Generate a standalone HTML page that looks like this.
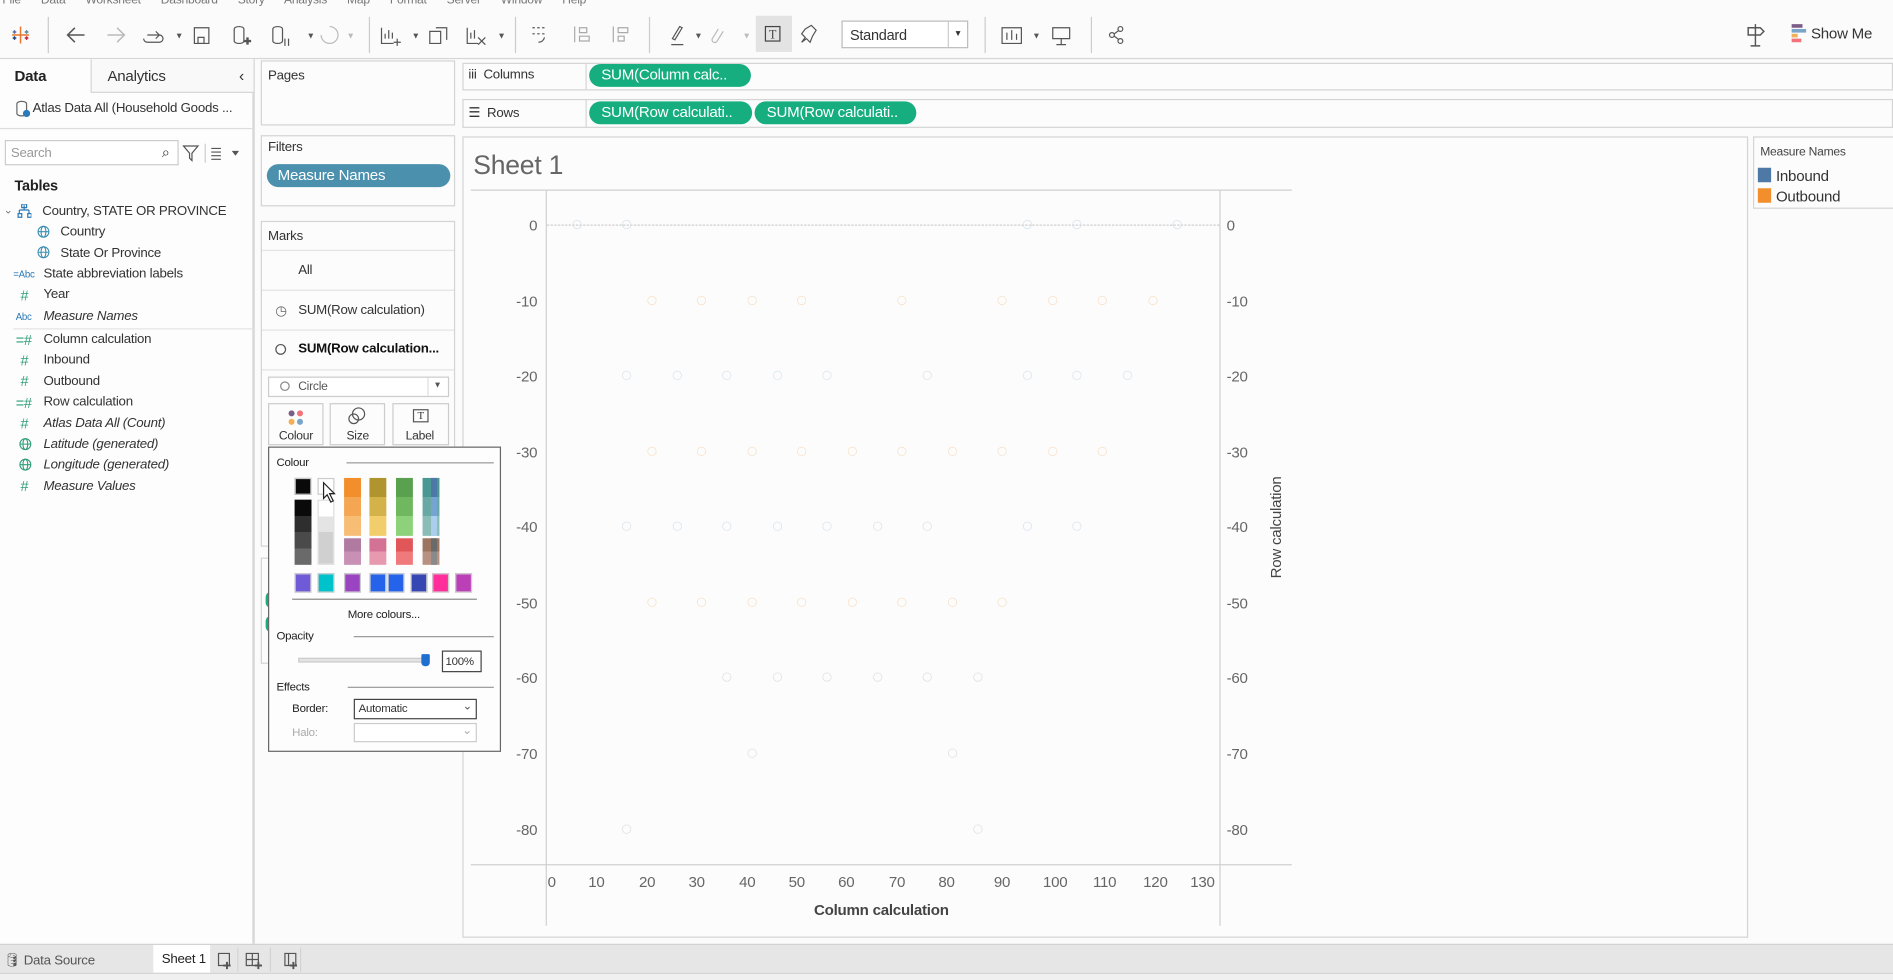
<!DOCTYPE html>
<html><head><meta charset="utf-8"><style>
*{box-sizing:border-box;margin:0;padding:0}
body{width:1893px;height:980px;overflow:hidden;background:#fbfbfb;font-family:"Liberation Sans",sans-serif;color:#333}
#w{position:absolute;left:0;top:0;width:1568px;height:812px;transform:scale(1.2073,1.2069);transform-origin:0 0;background:#fbfbfb;letter-spacing:-0.2px}
.a{position:absolute}
.t{position:absolute;font-size:11px;white-space:nowrap}
.box{position:absolute;border:1px solid #d4d4d4;background:#fcfcfc}
.pill{position:absolute;background:#17ae7f;color:#fff;border-radius:10px;font-size:12.5px;padding:2px 10px;height:19px;white-space:nowrap}
.g{color:#2f9e77}
.it{font-style:italic}
.sw{position:absolute;width:14px;border:1px solid #ccc}
</style></head><body><div id="w">
<div class="t" style="top:-5px;left:2px;color:#777;font-size:10px;word-spacing:14px">File Data Worksheet Dashboard Story Analysis Map Format Server Window Help</div>
<svg class="a" style="left:0;top:10px" width="1000" height="38">
<g stroke="#555" stroke-width="1" fill="none">
<g transform="translate(17,19)" stroke-width="1.2"><path d="M0-7V7M-7 0H7" stroke="#e8762c"/><path d="M-5-4V-1M-6.5-2.5H-3.5" stroke="#5b6fa5"/><path d="M5 1V4M3.5 2.5H6.5" stroke="#c72037"/><path d="M5-4V-1M3.5-2.5H6.5" stroke="#59879b"/><path d="M-5 1V4M-6.5 2.5H-3.5" stroke="#1f457e"/></g>
<path d="M40 4V34" stroke="#ccc"/>
<path d="M70 19H56M62 13L56 19L62 25" stroke-width="1.3"/>
<path d="M89 19H103M97 13L103 19L97 25" stroke="#bbb" stroke-width="1.3"/>
<path d="M119 22a3 3 0 0 0 3 3h10a3 3 0 0 0 0-6h-10M129 16l3 3-3 3"/>
<path d="M161 13h12v13h-12z"/><path d="M164 21h5v5h-5z"/>
<path d="M194 14a4 2 0 0 1 8 0v10a4 2 0 0 1-8 0z"/><path d="M202 24h6M205 21v6" stroke-width="2"/>
<path d="M226 14a4 2 0 0 1 8 0v10a4 2 0 0 1-8 0z"/><path d="M236 22v6M239 22v6"/>
<path d="M273 12a7 7 0 1 1-7 7" stroke="#bbb"/>
<path d="M306 4V34" stroke="#ccc"/>
<path d="M316 13v13h10M319 22v-4M322 22v-7M325 22v-5M326 25h6M329 22v6" />
<path d="M356 16h9v10h-9zM361 13h9v10"/>
<path d="M387 13v13h9M390 22v-5M393 22v-7M396 21l6 6M402 21l-6 6"/>
<path d="M427 4V34" stroke="#ccc"/>
<path d="M441 13h2M445 13h2M449 13h2M441 18h2M445 18h2M449 18h2M446 25a5 5 0 0 0 5-4"/>
<path d="M476 12v13M480 13h6v4h-6zM480 20h8v4h-8z" stroke="#aaa"/>
<path d="M508 12v13M512 13h8v4h-8zM512 20h5v4h-5z" stroke="#aaa"/>
<path d="M538 4V34" stroke="#ccc"/>
<path d="M556 27h10M557 22l6-10 2 1-6 10z"/>
<path d="M595 14l-5 8a2 2 0 0 0 4 2l5-8" stroke="#bbb"/>
</g>
<rect x="626" y="3" width="30" height="30" fill="#e3e3e3"/>
<rect x="634" y="12" width="12" height="12" fill="none" stroke="#444"/><text x="637" y="22" font-size="10" fill="#444" font-family="Liberation Serif">T</text>
<path d="M667 14l5-3 4 4-3 5-2 5-3-3-4 3 3-4-3-3z" fill="none" stroke="#555"/>
<text x="145" y="22" font-size="7" fill="#555">▼</text><text x="341" y="22" font-size="7" fill="#555">▼</text><text x="412" y="22" font-size="7" fill="#555">▼</text><text x="254" y="22" font-size="7" fill="#555">▼</text><text x="287" y="22" font-size="7" fill="#bbb">▼</text><text x="575" y="22" font-size="7" fill="#555">▼</text><text x="615" y="22" font-size="7" fill="#bbb">▼</text>
<g stroke="#555" fill="none" stroke-width="1">
<path d="M816 4V34" stroke="#ccc"/><path d="M830 13h16v13h-16zM834 23v-6M838 23v-8M842 23v-5"/>
<path d="M872 13h14v9h-14zM879 22v5M875 27h8"/>
<path d="M904 4V34" stroke="#ccc"/><circle cx="921" cy="19" r="2"/><circle cx="928" cy="14" r="2"/><circle cx="928" cy="24" r="2"/><path d="M923 18l4-3M923 20l4 3"/>
</g>
<text x="855" y="22" font-size="7" fill="#555">▼</text>
</svg>
<div class="a" style="left:697px;top:17px;width:105px;height:23px;border:1px solid #bbb;background:#fff;font-size:12px;padding:4px 6px">Standard<span style="position:absolute;right:0;top:0;width:16px;height:21px;border-left:1px solid #ccc;font-size:7px;text-align:center;line-height:21px">▼</span></div>
<svg class="a" style="left:1444px;top:18px" width="24" height="22"><path d="M10 2v18M6 20h8M4 5h10l3 3-3 3H4z" fill="none" stroke="#555" stroke-width="1.2"/></svg>
<div class="a" style="left:1484px;top:20px;width:9px;height:3px;background:#7b5d87"></div>
<div class="a" style="left:1484px;top:24px;width:12px;height:3px;background:#7ba4c9"></div>
<div class="a" style="left:1484px;top:28px;width:5px;height:3px;background:#f4b059"></div>
<div class="a" style="left:1484px;top:32px;width:8px;height:3px;background:#f3737a"></div>
<div class="t" style="left:1500px;top:21px;font-size:12.5px;color:#333">Show Me</div>
<div class="a" style="left:0;top:48px;width:1568px;height:1px;background:#d6d6d6"></div>
<div class="a" style="left:0;top:49px;width:210px;height:733px;background:#fdfdfd;border-right:1px solid #d6d6d6"></div>
<div class="a" style="left:75px;top:49px;width:136px;height:28px;border-left:1px solid #d6d6d6;border-bottom:1px solid #d6d6d6;background:#f9f9f9"></div>
<div class="t" style="left:12px;top:56px;font-size:12.5px;font-weight:bold;color:#222">Data</div>
<div class="t" style="left:89px;top:56px;font-size:12.5px">Analytics</div>
<div class="t" style="left:198px;top:55px;font-size:13px">‹</div>
<svg class="a" style="left:13px;top:83px" width="12" height="14"><path d="M1 3a4 2 0 0 1 8 0v8a4 2 0 0 1-8 0z" fill="none" stroke="#666"/><circle cx="9" cy="11" r="3" fill="#2c7ab8"/></svg>
<div class="t" style="left:27px;top:84px;font-size:11px">Atlas Data All (Household Goods ...</div>
<div class="a" style="left:0;top:106px;width:210px;height:1px;background:#ddd"></div>
<div class="a" style="left:4px;top:116px;width:144px;height:21px;border:1px solid #ccc;background:#fff"></div>
<div class="t" style="left:9px;top:121px;color:#999">Search</div>
<div class="t" style="left:134px;top:119px;font-size:12px">⌕</div>
<svg class="a" style="left:151px;top:119px" width="50" height="16"><path d="M1 2h12l-5 6v6l-2-2V8z" fill="none" stroke="#555"/><path d="M19 0v16" stroke="#ccc"/><path d="M24 4h8M24 7h8M24 10h8M24 13h8" stroke="#555"/><path d="M41 6l3 4 3-4z" fill="#555"/></svg>
<div class="t" style="left:12px;top:147px;font-size:12px;font-weight:bold;color:#222">Tables</div>
<div class="t" style="left:3px;top:169px;font-size:9px;color:#777">⌄</div>
<svg class="a" style="left:14px;top:169px" width="12" height="12"><path d="M6 1v4M2 5h8M2 5v3M10 5v3M1 8h3v3H1zM9 8h3v3H9zM4 0h4v3H4z" fill="none" stroke="#2c7ab8" stroke-width="1"/></svg>
<div class="t" style="left:35px;top:169px">Country, STATE OR PROVINCE</div>
<svg class="a" style="left:30px;top:186px" width="12" height="30"><g fill="none" stroke="#3a8db0" stroke-width="0.9"><circle cx="6" cy="6" r="4.5"/><ellipse cx="6" cy="6" rx="2" ry="4.5"/><path d="M1.5 6h9"/><circle cx="6" cy="23" r="4.5"/><ellipse cx="6" cy="23" rx="2" ry="4.5"/><path d="M1.5 23h9"/></g></svg>
<div class="t" style="left:50px;top:186px">Country</div>
<div class="t" style="left:50px;top:204px">State Or Province</div>
<div class="t" style="left:11px;top:223px;font-size:8px;color:#2c7ab8">=Abc</div><div class="t" style="left:36px;top:221px">State abbreviation labels</div>
<div class="t g" style="left:17px;top:238px;font-size:12px">#</div><div class="t" style="left:36px;top:238px">Year</div>
<div class="t" style="left:13px;top:258px;font-size:8px;color:#2c7ab8">Abc</div><div class="t it" style="left:36px;top:256px">Measure Names</div>
<div class="a" style="left:11px;top:272px;width:199px;height:1px;background:#e3e3e3"></div>
<div class="t g" style="left:13px;top:275px;font-size:12px">=#</div><div class="t" style="left:36px;top:275px">Column calculation</div>
<div class="t g" style="left:17px;top:292px;font-size:12px">#</div><div class="t" style="left:36px;top:292px">Inbound</div>
<div class="t g" style="left:17px;top:309px;font-size:12px">#</div><div class="t" style="left:36px;top:310px">Outbound</div>
<div class="t g" style="left:13px;top:327px;font-size:12px">=#</div><div class="t" style="left:36px;top:327px">Row calculation</div>
<div class="t g" style="left:17px;top:344px;font-size:12px">#</div><div class="t it" style="left:36px;top:345px">Atlas Data All (Count)</div>
<svg class="a" style="left:15px;top:362px" width="12" height="30"><g fill="none" stroke="#2f9e77" stroke-width="0.9"><circle cx="6" cy="6" r="4.5"/><ellipse cx="6" cy="6" rx="2" ry="4.5"/><path d="M1.5 6h9"/><circle cx="6" cy="23" r="4.5"/><ellipse cx="6" cy="23" rx="2" ry="4.5"/><path d="M1.5 23h9"/></g></svg>
<div class="t it" style="left:36px;top:362px">Latitude (generated)</div>
<div class="t it" style="left:36px;top:379px">Longitude (generated)</div>
<div class="t g" style="left:17px;top:396px;font-size:12px">#</div><div class="t it" style="left:36px;top:397px">Measure Values</div>
<div class="box" style="left:216px;top:50px;width:161px;height:54px"></div>
<div class="t" style="left:222px;top:57px">Pages</div>
<div class="box" style="left:216px;top:112px;width:161px;height:59px"></div>
<div class="t" style="left:222px;top:116px">Filters</div>
<div class="a" style="left:221px;top:136px;width:152px;height:19px;background:#4b91ae;border-radius:10px;color:#fff;font-size:12.5px;padding:2px 9px">Measure Names</div>
<div class="box" style="left:216px;top:183px;width:161px;height:270px"></div>
<div class="t" style="left:222px;top:190px">Marks</div>
<div class="a" style="left:217px;top:207px;width:159px;height:1px;background:#e3e3e3"></div>
<div class="t" style="left:247px;top:218px">All</div>
<div class="a" style="left:217px;top:240px;width:159px;height:1px;background:#e3e3e3"></div>
<div class="t" style="left:228px;top:251px;color:#666">◷</div><div class="t" style="left:247px;top:251px">SUM(Row calculation)</div>
<div class="a" style="left:217px;top:273px;width:159px;height:1px;background:#e3e3e3"></div>
<div class="a" style="left:228px;top:285px;width:9px;height:9px;border:1px solid #555;border-radius:50%"></div><div class="t" style="left:247px;top:283px;font-weight:bold;color:#111">SUM(Row calculation...</div>
<div class="a" style="left:217px;top:306px;width:159px;height:1px;background:#e3e3e3"></div>
<div class="a" style="left:222px;top:312px;width:150px;height:17px;border:1px solid #ccc;background:#fff"></div>
<div class="a" style="left:232px;top:316px;width:8px;height:8px;border:1px solid #888;border-radius:50%"></div>
<div class="t" style="left:247px;top:315px;font-size:10px;color:#555">Circle</div>
<div class="a" style="left:354px;top:313px;width:1px;height:15px;background:#ddd"></div><div class="t" style="left:359px;top:316px;font-size:7px;color:#555">▼</div>
<div class="a" style="left:222px;top:334px;width:46px;height:35px;border:1px solid #ccc"></div>
<div class="a" style="left:273px;top:334px;width:46px;height:35px;border:1px solid #ccc"></div>
<div class="a" style="left:325px;top:334px;width:47px;height:35px;border:1px solid #ccc"></div>
<div class="a" style="left:239px;top:340px;width:5px;height:5px;border-radius:50%;background:#7b5d87"></div>
<div class="a" style="left:246px;top:340px;width:5px;height:5px;border-radius:50%;background:#f3737a"></div>
<div class="a" style="left:239px;top:347px;width:5px;height:5px;border-radius:50%;background:#f4b059"></div>
<div class="a" style="left:246px;top:347px;width:5px;height:5px;border-radius:50%;background:#7ba4c9"></div>
<div class="t" style="left:231px;top:356px;font-size:10px">Colour</div>
<svg class="a" style="left:288px;top:337px" width="16" height="16"><circle cx="9" cy="6" r="5" fill="none" stroke="#555"/><circle cx="5" cy="10" r="4" fill="none" stroke="#555"/></svg>
<div class="t" style="left:287px;top:356px;font-size:10px">Size</div>
<div class="a" style="left:342px;top:339px;width:13px;height:11px;border:1px solid #555;font-size:9px;text-align:center;line-height:9px;font-family:'Liberation Serif'">T</div>
<div class="t" style="left:336px;top:356px;font-size:10px">Label</div>
<div class="box" style="left:216px;top:462px;width:161px;height:88px"></div>
<div class="a" style="left:220px;top:490px;width:10px;height:14px;background:#17ae7f;border-radius:7px"></div>
<div class="a" style="left:220px;top:510px;width:10px;height:14px;background:#17ae7f;border-radius:7px"></div>
<div class="a" style="left:210px;top:49px;width:1px;height:733px;background:#d6d6d6"></div>
<div class="box" style="left:383px;top:52px;width:1185px;height:23px"></div>
<div class="a" style="left:485px;top:52px;width:1px;height:23px;background:#d6d6d6"></div>
<div class="t" style="left:388px;top:56px;font-size:11px">iii&nbsp; Columns</div>
<div class="pill" style="left:488px;top:53px;width:134px">SUM(Column calc..</div>
<div class="box" style="left:383px;top:82px;width:1185px;height:24px"></div>
<div class="a" style="left:485px;top:82px;width:1px;height:24px;background:#d6d6d6"></div>
<div class="t" style="left:388px;top:87px;font-size:11px">☰&nbsp; Rows</div>
<div class="pill" style="left:488px;top:84px;width:135px">SUM(Row calculati..</div>
<div class="pill" style="left:625px;top:84px;width:134px">SUM(Row calculati..</div>
<div class="box" style="left:383px;top:113px;width:1065px;height:664px"></div>
<div class="t" style="left:392px;top:124px;font-size:22px;color:#666">Sheet 1</div>
<div class="box" style="left:1452px;top:113px;width:120px;height:60px"></div>
<div class="t" style="left:1458px;top:121px;font-size:10px;color:#444">Measure Names</div>
<div class="a" style="left:1456px;top:139px;width:11px;height:12px;background:#4e79a7"></div><div class="t" style="left:1471px;top:139px;font-size:12.5px">Inbound</div>
<div class="a" style="left:1456px;top:156px;width:11px;height:12px;background:#f28e2b"></div><div class="t" style="left:1471px;top:156px;font-size:12.5px">Outbound</div>
<svg class="a" style="left:383px;top:113px" width="1065" height="664" font-family="Liberation Sans" font-size="12.5" fill="#666">
<g transform="translate(-383,-113)">
<path d="M390 157.5H1070M390 716.5H1070M452.5 157V767M1010.5 157V767" stroke="#d0d0d0"/>
<path d="M453 186.5H1010" stroke="#d0d0d0" stroke-dasharray="2 1"/>
<g text-anchor="end"><text x="445" y="191">0</text><text x="445" y="254">-10</text><text x="445" y="316">-20</text><text x="445" y="379">-30</text><text x="445" y="441">-40</text><text x="445" y="504">-50</text><text x="445" y="566">-60</text><text x="445" y="629">-70</text><text x="445" y="692">-80</text></g>
<g><text x="1016" y="191">0</text><text x="1016" y="254">-10</text><text x="1016" y="316">-20</text><text x="1016" y="379">-30</text><text x="1016" y="441">-40</text><text x="1016" y="504">-50</text><text x="1016" y="566">-60</text><text x="1016" y="629">-70</text><text x="1016" y="692">-80</text></g>
<g text-anchor="middle"><text x="457" y="735">0</text><text x="494" y="735">10</text><text x="536" y="735">20</text><text x="577" y="735">30</text><text x="619" y="735">40</text><text x="660" y="735">50</text><text x="701" y="735">60</text><text x="743" y="735">70</text><text x="784" y="735">80</text><text x="830" y="735">90</text><text x="874" y="735">100</text><text x="915" y="735">110</text><text x="957" y="735">120</text><text x="996" y="735">130</text></g>
<text x="730" y="758" text-anchor="middle" font-weight="bold" font-size="12.5" fill="#444">Column calculation</text>
<text transform="translate(1061,437) rotate(-90)" text-anchor="middle" font-size="12.5" fill="#444">Row calculation</text>
<g fill="none" stroke-width="0.6">
<g stroke="#d3e0ea"><circle cx="478" cy="186" r="3.5"/><circle cx="519" cy="186" r="3.5"/><circle cx="851" cy="186" r="3.5"/><circle cx="892" cy="186" r="3.5"/><circle cx="975" cy="186" r="3.5"/></g>
<g stroke="#f6e0c4"><circle cx="540" cy="249" r="3.5"/><circle cx="581" cy="249" r="3.5"/><circle cx="623" cy="249" r="3.5"/><circle cx="664" cy="249" r="3.5"/><circle cx="747" cy="249" r="3.5"/><circle cx="830" cy="249" r="3.5"/><circle cx="872" cy="249" r="3.5"/><circle cx="913" cy="249" r="3.5"/><circle cx="955" cy="249" r="3.5"/></g>
<g stroke="#d8e3ec"><circle cx="519" cy="311" r="3.5"/><circle cx="561" cy="311" r="3.5"/><circle cx="602" cy="311" r="3.5"/><circle cx="644" cy="311" r="3.5"/><circle cx="685" cy="311" r="3.5"/><circle cx="768" cy="311" r="3.5"/><circle cx="851" cy="311" r="3.5"/><circle cx="892" cy="311" r="3.5"/><circle cx="934" cy="311" r="3.5"/></g>
<g stroke="#f6e0c4"><circle cx="540" cy="374" r="3.5"/><circle cx="581" cy="374" r="3.5"/><circle cx="623" cy="374" r="3.5"/><circle cx="664" cy="374" r="3.5"/><circle cx="706" cy="374" r="3.5"/><circle cx="747" cy="374" r="3.5"/><circle cx="789" cy="374" r="3.5"/><circle cx="830" cy="374" r="3.5"/><circle cx="872" cy="374" r="3.5"/><circle cx="913" cy="374" r="3.5"/></g>
<g stroke="#d8e3ec"><circle cx="519" cy="436" r="3.5"/><circle cx="561" cy="436" r="3.5"/><circle cx="602" cy="436" r="3.5"/><circle cx="644" cy="436" r="3.5"/><circle cx="685" cy="436" r="3.5"/><circle cx="727" cy="436" r="3.5"/><circle cx="768" cy="436" r="3.5"/><circle cx="851" cy="436" r="3.5"/><circle cx="892" cy="436" r="3.5"/></g>
<g stroke="#f6e0c4"><circle cx="540" cy="499" r="3.5"/><circle cx="581" cy="499" r="3.5"/><circle cx="623" cy="499" r="3.5"/><circle cx="664" cy="499" r="3.5"/><circle cx="706" cy="499" r="3.5"/><circle cx="747" cy="499" r="3.5"/><circle cx="789" cy="499" r="3.5"/><circle cx="830" cy="499" r="3.5"/></g>
<g stroke="#e0e0e0"><circle cx="602" cy="561" r="3.5"/><circle cx="644" cy="561" r="3.5"/><circle cx="685" cy="561" r="3.5"/><circle cx="727" cy="561" r="3.5"/><circle cx="768" cy="561" r="3.5"/><circle cx="810" cy="561" r="3.5"/><circle cx="623" cy="624" r="3.5"/><circle cx="789" cy="624" r="3.5"/><circle cx="519" cy="687" r="3.5"/><circle cx="810" cy="687" r="3.5"/></g>
</g></g></svg>
<div class="a" style="left:222px;top:370px;width:193px;height:253px;border:1px solid #666;background:#fdfdfd"></div>
<div class="t" style="left:229px;top:378px;font-size:9.5px;color:#222">Colour</div>
<div class="a" style="left:287px;top:383px;width:122px;height:1px;background:#999"></div>
<div class="sw" style="left:244px;top:396px;height:14px;background:#0a0a0a"></div>
<div class="sw" style="left:263px;top:396px;height:14px;background:#fff"></div>
<div class="a" style="left:244px;top:414px;width:14px;height:54px;background:linear-gradient(#0a0a0a 25%,#2e2e2e 25% 50%,#4a4a4a 50% 75%,#6a6a6a 75%)"></div>
<div class="a" style="left:263px;top:414px;width:14px;height:54px;border:1px solid #ddd;background:linear-gradient(#fff 25%,#e4e4e4 25% 50%,#d0d0d0 50%)"></div>
<div class="a" style="left:285px;top:396px;width:14px;height:48px;background:linear-gradient(#f28e2b 33%,#f4a653 33% 66%,#f8bd75 66%)"></div>
<div class="a" style="left:306px;top:396px;width:14px;height:48px;background:linear-gradient(#b0952f 33%,#d4b24a 33% 66%,#f2cd6c 66%)"></div>
<div class="a" style="left:328px;top:396px;width:14px;height:48px;background:linear-gradient(#59a14f 33%,#6fb85f 33% 66%,#8dd17b 66%)"></div>
<div class="a" style="left:350px;top:396px;width:14px;height:48px;background:linear-gradient(#499894 33%,#69a9a5 33% 66%,#8bbcb7 66%)"></div>
<div class="a" style="left:357px;top:396px;width:5px;height:48px;background:linear-gradient(#4e79a7 33%,#74a4cf 33% 66%,#a9cfec 66%)"></div>
<div class="a" style="left:285px;top:446px;width:14px;height:22px;background:linear-gradient(#b07aa1 50%,#c790b4 50%)"></div>
<div class="a" style="left:306px;top:446px;width:14px;height:22px;background:linear-gradient(#d37295 50%,#e79aaf 50%)"></div>
<div class="a" style="left:328px;top:446px;width:14px;height:22px;background:linear-gradient(#e15759 50%,#f07a7b 50%)"></div>
<div class="a" style="left:350px;top:446px;width:14px;height:22px;background:linear-gradient(#9c7561 50%,#b79282 50%)"></div>
<div class="a" style="left:357px;top:446px;width:5px;height:22px;background:linear-gradient(#6a6a6a 50%,#8a8a8a 50%)"></div>
<div class="sw" style="left:244px;top:475px;height:16px;background:#6f5bd7"></div>
<div class="sw" style="left:263px;top:475px;height:16px;background:#00c2cb"></div>
<div class="sw" style="left:285px;top:475px;height:16px;background:#9b44c1"></div>
<div class="sw" style="left:306px;top:475px;height:16px;background:#2563eb"></div>
<div class="sw" style="left:321px;top:475px;height:16px;background:#2563eb"></div>
<div class="sw" style="left:340px;top:475px;height:16px;background:#3646b3"></div>
<div class="sw" style="left:358px;top:475px;height:16px;background:#ff2e9a"></div>
<div class="sw" style="left:377px;top:475px;height:16px;background:#bb3fb6"></div>
<svg class="a" style="left:267px;top:399px" width="12" height="18"><path d="M1 1v13l3-3 3 6 2-1-3-6h4z" fill="#fff" stroke="#222"/></svg>
<div class="a" style="left:242px;top:496px;width:153px;height:1px;background:#888"></div>
<div class="t" style="left:288px;top:504px;font-size:9.5px;color:#222">More colours...</div>
<div class="t" style="left:229px;top:522px;font-size:9.5px;color:#222">Opacity</div>
<div class="a" style="left:293px;top:527px;width:116px;height:1px;background:#999"></div>
<div class="a" style="left:247px;top:545px;width:108px;height:4px;background:#e3e3e3;border:1px solid #ccc"></div>
<div class="a" style="left:349px;top:542px;width:7px;height:10px;background:#1e6fd0;border-radius:1px 1px 3px 3px"></div>
<div class="a" style="left:366px;top:539px;width:33px;height:18px;border:1px solid #444;background:#fff;font-size:9.5px;padding:3px 2px">100%</div>
<div class="t" style="left:229px;top:564px;font-size:9.5px;color:#222">Effects</div>
<div class="a" style="left:288px;top:569px;width:121px;height:1px;background:#999"></div>
<div class="t" style="left:242px;top:582px;font-size:9.5px;color:#222">Border:</div>
<div class="a" style="left:293px;top:579px;width:102px;height:17px;border:1px solid #444;background:#fff;font-size:9.5px;padding:2px 3px">Automatic<span style="position:absolute;right:3px;top:0;color:#555">⌄</span></div>
<div class="t" style="left:242px;top:602px;font-size:9.5px;color:#aaa">Halo:</div>
<div class="a" style="left:293px;top:599px;width:102px;height:16px;border:1px solid #ccc;background:#fff"><span style="position:absolute;right:3px;top:0;color:#aaa;font-size:10px">⌄</span></div>
<div class="a" style="left:0;top:782px;width:1568px;height:30px;background:#e6e6e6;border-top:1px solid #d3d3d3"></div>
<div class="t" style="left:3px;top:789px;color:#555">🛢︎ Data Source</div>
<div class="a" style="left:127px;top:783px;width:47px;height:23px;background:#fff"></div>
<div class="t" style="left:134px;top:789px;color:#222">Sheet 1</div>
<svg class="a" style="left:176px;top:785px" width="80" height="20"><g fill="none" stroke="#555"><path d="M5 5h9v10H5z"/><path d="M12 12v6M9 15h6" stroke-width="1.6"/><path d="M28 5h10v10H28zM33 5v10M28 10h10"/><path d="M38 12v6M35 15h6" stroke-width="1.6"/><path d="M60 5h9v10h-9zM63 5v10"/><path d="M67 12v6M64 15h6" stroke-width="1.6"/></g><path d="M21 0v21M48 0v21M73 0v21" stroke="#d3d3d3"/></svg>
<div class="a" style="left:0;top:806px;width:1568px;height:6px;background:#f0f0f0;border-top:1px solid #d3d3d3"></div>
</div></body></html>
